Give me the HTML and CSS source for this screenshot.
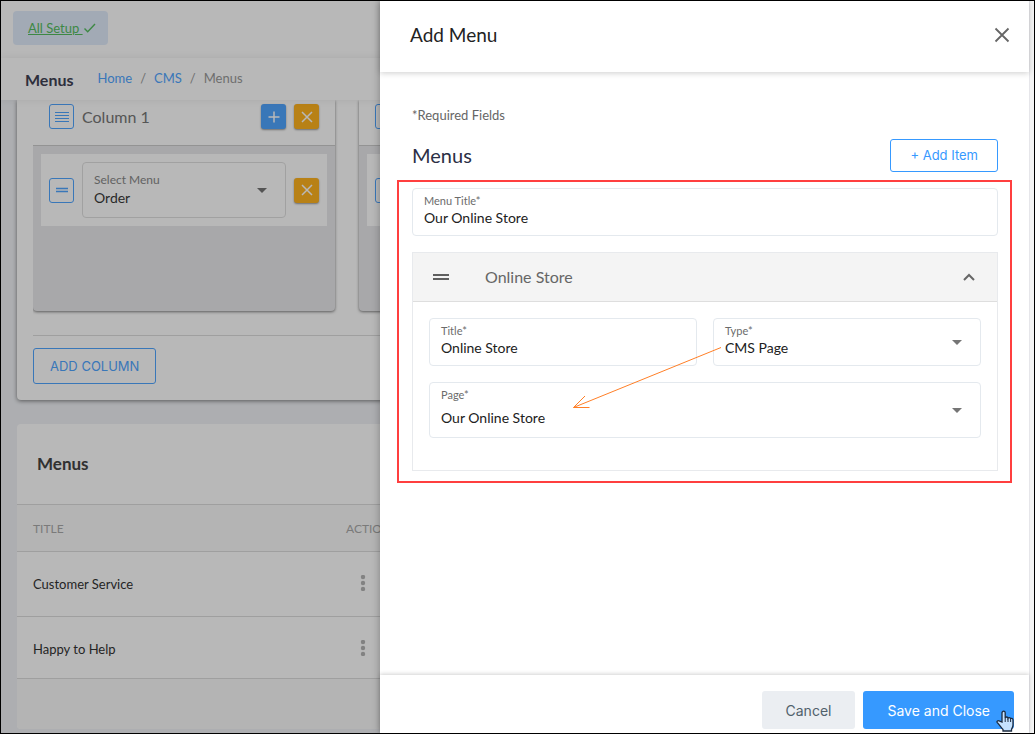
FILE: index.html
```html
<!DOCTYPE html>
<html lang="en">
<head>
<meta charset="utf-8">
<title>Add Menu</title>
<link rel="stylesheet" href="styles.css">
</head>
<body>
<div class="app">
  <div class="page">
    <header class="topbar">
      <a class="setup" href="#"><span class="setup-text">All Setup&nbsp;</span><svg width="13" height="10" viewBox="0 0 13 10"><path d="M1.500 5.500 4.700 8.700 12 1" fill="none" stroke="currentColor" stroke-width="1.400"/></svg></a>
    </header>
    <div class="subheader">
      <h1 class="page-title">Menus</h1>
      <nav class="crumbs"><a href="#">Home</a><span>/</span><a href="#">CMS</a><span>/</span><span>Menus</span></nav>
    </div>
    <main class="content">
      <section class="card builder">
        <div class="columns">
          <div class="column">
            <div class="column-head">
              <button class="square outline" aria-label="Move column"><svg width="14" height="12" viewBox="0 0 14 12"><path d="M0 1.500h14M0 4.500h14M0 7.500h14M0 10.500h14" stroke="currentColor"/></svg></button>
              <h2 class="column-title">Column 1</h2>
              <button class="square blue" aria-label="Add"><svg width="12" height="12" viewBox="0 0 12 12"><path d="M6 .5v11M.5 6h11" stroke="currentColor" stroke-width="1.500"/></svg></button>
              <button class="square amber" aria-label="Remove column"><svg width="12" height="12" viewBox="0 0 12 12"><path d="m1 1 10 10M11 1 1 11" stroke="currentColor" stroke-width="1.500"/></svg></button>
            </div>
            <div class="column-body">
              <div class="column-item">
                <button class="square outline" aria-label="Move item"><svg width="14" height="12" viewBox="0 0 14 12"><path d="M1 4.500h12M1 7.500h12" stroke="currentColor" stroke-width="1.400"/></svg></button>
                <div class="field menu-select">
                  <label for="menu1">Select Menu</label>
                  <select id="menu1"><option>Order</option></select>
                  <svg class="caret" width="10" height="5" viewBox="0 0 10 5"><path d="M0 0h10L5 5z" fill="currentColor"/></svg>
                </div>
                <button class="square amber" aria-label="Remove item"><svg width="12" height="12" viewBox="0 0 12 12"><path d="m1 1 10 10M11 1 1 11" stroke="currentColor" stroke-width="1.500"/></svg></button>
              </div>
            </div>
          </div>
          <div class="column">
            <div class="column-head">
              <button class="square outline" aria-label="Move column"></button>
            </div>
            <div class="column-body">
              <div class="column-item"><button class="square outline" aria-label="Move item"></button></div>
            </div>
          </div>
        </div>
        <div class="builder-foot"><button class="add-column">ADD COLUMN</button></div>
      </section>
      <section class="card list">
        <h2 class="list-title">Menus</h2>
        <table class="menus">
          <thead><tr><th class="name-col">TITLE</th><th>ACTIONS</th></tr></thead>
          <tbody>
            <tr class="row-first"><td>Customer Service</td><td><button class="dots" aria-label="Actions"><svg width="6" height="16" viewBox="0 0 6 16" fill="currentColor"><circle cx="3" cy="2" r="2.200"/><circle cx="3" cy="8" r="2.200"/><circle cx="3" cy="14" r="2.200"/></svg></button></td></tr>
            <tr class="row-last"><td>Happy to Help</td><td><button class="dots" aria-label="Actions"><svg width="6" height="16" viewBox="0 0 6 16" fill="currentColor"><circle cx="3" cy="2" r="2.200"/><circle cx="3" cy="8" r="2.200"/><circle cx="3" cy="14" r="2.200"/></svg></button></td></tr>
          </tbody>
        </table>
        <div class="list-foot"></div>
      </section>
    </main>
  </div>
  <div class="backdrop"></div>
  <aside class="drawer">
    <div class="drawer-main">
      <header class="drawer-head">
        <h2 class="drawer-title">Add Menu</h2>
        <button class="close" aria-label="Close"><svg width="16" height="16" viewBox="0 0 16 16"><path d="m1.500 1.500 13 13M14.500 1.500l-13 13" stroke="currentColor" stroke-width="1.800"/></svg></button>
      </header>
      <form class="drawer-body" id="menu-form">
        <p class="required">*Required Fields</p>
        <div class="section-head">
          <h3 class="section-title">Menus</h3>
          <button type="button" class="add-item">+ Add Item</button>
        </div>
        <div class="marked">
          <div class="field">
            <label for="menu-title">Menu Title*</label>
            <input id="menu-title" type="text" value="Our Online Store">
          </div>
          <section class="panel">
            <header class="panel-head">
              <svg width="16" height="8" viewBox="0 0 16 8"><path d="M0 2h16M0 6h16" stroke="currentColor" stroke-width="2"/></svg>
              <h4 class="panel-title">Online Store</h4>
              <button type="button" class="toggle" aria-label="Collapse"><svg width="12" height="8" viewBox="0 0 12 8"><path d="m1 7 5-5 5 5" fill="none" stroke="currentColor" stroke-width="2"/></svg></button>
            </header>
            <div class="panel-body">
              <div class="field">
                <label for="title">Title*</label>
                <input id="title" type="text" value="Online Store">
              </div>
              <div class="field">
                <label for="type">Type*</label>
                <select id="type"><option>CMS Page</option></select>
                <svg class="caret" width="10" height="5" viewBox="0 0 10 5"><path d="M0 0h10L5 5z" fill="currentColor"/></svg>
              </div>
              <div class="field tall">
                <label for="page">Page*</label>
                <select id="page"><option>Our Online Store</option></select>
                <svg class="caret" width="10" height="5" viewBox="0 0 10 5"><path d="M0 0h10L5 5z" fill="currentColor"/></svg>
              </div>
            </div>
          </section>
          <div class="mark-box"></div>
          <svg class="mark-arrow" width="150" height="64" viewBox="0 0 150 64"><path d="M149 1.500 1.500 61.500M13 50 1.500 61.500H17.500" fill="none" stroke="#ff7f27"/></svg>
        </div>
      </form>
      <footer class="drawer-foot">
        <button class="btn cancel">Cancel</button>
        <button class="btn save">Save and Close</button>
        <svg class="pointer" width="18" height="22" viewBox="0 0 18 22"><path d="M6 12V2.800a1.600 1.600 0 0 1 3.200 0V8c.3-1.400 2.600-1.300 2.800.2.500-1 2.400-.8 2.600.6.600-.8 2.200-.5 2.400 1V15c0 2-1 3-1.500 4.500V21H7v-1.500C5.500 18 3.500 15 1.300 12.600.3 11.300 2 10 3.200 10.900z" fill="#c5e2ff" stroke="#1c2b3f" stroke-width="1.300"/><path d="M9.200 8v4M12 8.500V12M14.600 9.500V12" stroke="#1c2b3f"/></svg>
      </footer>
    </div>
  </aside>
</div>
</body>
</html>
```
FILE: styles.css
```css
* { box-sizing: border-box; }
body { margin: 0; font-family: Lato, "Open Sans", sans-serif; font-size: 14px; color: #3f4254; }
h1, h2, h3, h4, p { margin: 0; font-weight: 400; }
a { color: #50a5ff; text-decoration: none; }
button { font-family: Inter, "Open Sans", sans-serif; cursor: pointer; }
svg { display: block; flex: none; }

.app { position: relative; height: 100vh; border: 1px solid #000; overflow: hidden; }
.page { height: 100%; display: flex; flex-direction: column; background: #f0f2f6; }

.topbar { flex: none; height: 57px; padding: 10px 12px; background: #fff; }
.setup { display: inline-flex; align-items: center; height: 34px; padding: 0 12px 0 15px; border-radius: 4px; background: #e1ecfb; color: #55bd5f; font-size: 13px; }
.setup-text { text-decoration: underline; }
.subheader { flex: none; position: relative; display: flex; align-items: center; gap: 24px; height: 42px; padding: 0 24px; background: #fff; box-shadow: 0 0 8px rgba(0, 0, 0, .08); }
.page-title { font-size: 16px; font-weight: 700; color: #3f4254; }
.crumbs { display: flex; gap: 8px; padding-bottom: 2px; font-size: 13px; color: #999; }

.content { flex: 1; min-height: 0; overflow: hidden; padding: 0 16px; }
.card { background: #fff; border-radius: 4px; }
.builder { padding: 0 16px 16px; margin-bottom: 24px; border-radius: 0 0 4px 4px; box-shadow: 0 1px 4px rgba(0, 0, 0, .5); }
.columns { display: flex; gap: 24px; padding-bottom: 24px; border-bottom: 1px solid #ddd; overflow: hidden; }
.column { flex: none; width: 302px; border-radius: 0 0 4px 4px; background: #e9e9ec; box-shadow: 0 1px 3px rgba(0, 0, 0, .5); overflow: hidden; }
.column-head { display: flex; align-items: center; gap: 8px; height: 46px; padding: 0 16px 12px; background: #fff; border-bottom: 1px solid #ccc; }
.column-title { flex: 1; font-size: 16px; color: #777; }
.column-body { height: 165px; padding: 8px; }
.column-item { display: flex; align-items: center; gap: 8px; height: 72px; padding: 0 8px; background: #fff; }
.square { flex: none; display: flex; align-items: center; justify-content: center; width: 25px; height: 25px; padding: 0; border: 0; border-radius: 3px; color: #fff; }
.outline { border: 1px solid #50a5ff; background: #fff; color: #50a5ff; }
.blue { background: #50a5ff; box-shadow: 0 1px 2px rgba(0, 0, 0, .4); }
.amber { background: #ffb31f; box-shadow: 0 1px 2px rgba(0, 0, 0, .4); }
.builder-foot { padding-top: 12px; }
.add-column { height: 36px; padding: 0 16px; border: 1px solid #50a5ff; border-radius: 3px; background: #fff; color: #50a5ff; font-size: 13px; }

.list { overflow: hidden; }
.list-title { padding: 0 20px; font-size: 17px; line-height: 80px; font-weight: 700; color: #444; }
.menus { width: 100%; table-layout: fixed; border-collapse: collapse; }
.menus th, .menus td { padding: 0 16px; text-align: left; border-bottom: 1px solid #ddd; }
.menus th { height: 47px; font-size: 12px; font-weight: 400; color: #aaa; background: #fafafa; border-top: 1px solid #ddd; }
.name-col { width: 313px; }
.menus td { font-size: 13px; color: #333; }
.row-first { height: 65px; }
.row-last { height: 62px; }
.menus .row-last td { padding-top: 2px; }
.dots { padding: 1px 14px 0; border: 0; background: none; color: #b5b5b5; }
.list-foot { height: 50px; background: #fafafa; }

.field { position: relative; display: flex; flex-direction: column; height: 48px; padding: 4px 11px; border: 1px solid #e4e9ee; border-radius: 4px; background: #fff; }
.field label { font-size: 11px; line-height: 16px; color: #6b6b6b; }
.field input, .field select { width: 100%; height: 16px; padding: 0; border: 0; background: none; appearance: none; outline: 0; font-family: inherit; font-size: 14px; color: #212121; }
.field.tall { height: 56px; gap: 6px; }
.caret { position: absolute; right: 18px; top: 50%; margin-top: -2px; color: #757575; pointer-events: none; }
.menu-select { flex: 1; height: 56px; padding-top: 9px; border-color: #e0e0e0; }
.menu-select label { font-size: 12px; color: #888; }
.field.menu-select select { height: 18px; color: #3a3a3a; }

.backdrop { position: absolute; inset: 0; background: rgba(0, 0, 0, .28); }
.drawer { position: absolute; inset: 0 0 0 auto; width: 654px; max-width: 100%; padding-right: 4px; background: #f4f4f4; box-shadow: 0 0 8px rgba(0, 0, 0, .3); }
.drawer-main { display: flex; flex-direction: column; height: 100%; background: #fff; border-right: 1px solid #e6e6ea; }
.drawer-head { flex: none; display: flex; align-items: center; justify-content: space-between; height: 71px; padding: 0 19px 4px 30px; box-shadow: 0 1px 6px rgba(0, 0, 0, .2); }
.drawer-title { font-size: 19px; color: #222; }
.close, .toggle { padding: 0; border: 0; background: none; color: #666; }
.drawer-body { flex: 1; min-height: 0; padding: 34px 31px 0 32px; }
.required { font-size: 13px; line-height: 18px; color: #666; }
.section-head { display: flex; align-items: center; justify-content: space-between; margin: 15px 0 16px; }
.section-title { padding-bottom: 2px; font-size: 20px; color: #2b2f45; }
.add-item { height: 33px; padding: 0 19px 2px; border: 1px solid #3699ff; border-radius: 3px; background: #fff; color: #3699ff; font-size: 13px; }
.marked { position: relative; }
.mark-box { position: absolute; inset: -8px -14px -12px -15px; border: 2px solid #ff3f3f; pointer-events: none; }
.mark-arrow { position: absolute; left: 160px; top: 158px; pointer-events: none; }
.panel { margin-top: 16px; border: 1px solid #e8eaed; }
.panel-head { display: flex; align-items: center; height: 49px; padding: 0 22px 0 20px; background: #f4f4f4; border-bottom: 1px solid #dedede; color: #5f5f5f; }
.panel-title { flex: 1; margin-left: 36px; padding-bottom: 2px; font-size: 16px; color: #666; }
.panel-body { display: grid; grid-template-columns: 1fr 1fr; gap: 16px; padding: 16px 16px 32px; }
.tall { grid-column: 1 / -1; }
.drawer-foot { flex: none; position: relative; display: flex; justify-content: flex-end; gap: 8px; height: 58px; padding: 16px 15px 4px; box-shadow: 0 -1px 4px rgba(0, 0, 0, .18); }
.btn { height: 38px; padding: 0 24px; border: 0; border-radius: 3px; font-size: 14px; }
.cancel { background: #ebeef2; color: #51616c; }
.save { background: #3699ff; color: #fff; }
.pointer { position: absolute; right: 15px; bottom: 1px; }
```
